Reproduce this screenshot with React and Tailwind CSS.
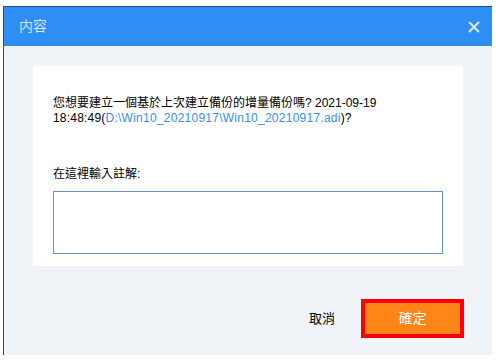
export default function App() {
  return (
    <div className="w-[501px] h-[360px] bg-white pt-[6px] pl-[3px] font-['Liberation_Sans','Noto_Sans_CJK_TC',sans-serif]">
      <div className="w-[489px] h-[349px] border-l border-t border-[#1d4e8c] flex flex-col bg-[#f0f4f9]">
        {/* Title bar */}
        <div className="h-[39px] bg-[#2f8ef4] flex items-center justify-between pl-[15px] pr-[12px]">
          <span className="text-[14px] text-[#d3e5fb]">内容</span>
          <svg width="12" height="12" viewBox="0 0 12 12">
            <path d="M1 1L11 11M11 1L1 11" stroke="#dde9f8" strokeWidth="2" />
          </svg>
        </div>

        {/* Body */}
        <div className="flex-1 flex flex-col px-[29px] pt-[20px]">
          <div className="bg-white h-[200px] pt-[30px] px-[20px]">
            <p className="text-[12px] leading-[15px] text-black">
              您想要建立一個基於上次建立備份的增量備份嗎? 2021-09-19
              <br />
              <span className="tracking-[0.2px]">18:48:49(</span>
              <span className="text-[#3a8ee6] tracking-[0.25px]">D:\Win10_20210917\Win10_20210917.adi</span>)?
            </p>
            <p className="mt-[41px] text-[12px] leading-[15px] text-black">在這裡輸入註解:</p>
            <textarea className="mt-[9px] w-[390px] h-[63px] border border-[#6892c4] outline-none resize-none block" />
          </div>

          <div className="flex items-center justify-end mt-[33px] -mr-[1px]">
            <button className="text-[13px] text-black mr-[26px]">取消</button>
            <button className="w-[103px] h-[39px] border-4 border-[#ff0000] bg-[#ff8516] text-white text-[14px]">
              確定
            </button>
          </div>
        </div>
      </div>
    </div>
  );
}
